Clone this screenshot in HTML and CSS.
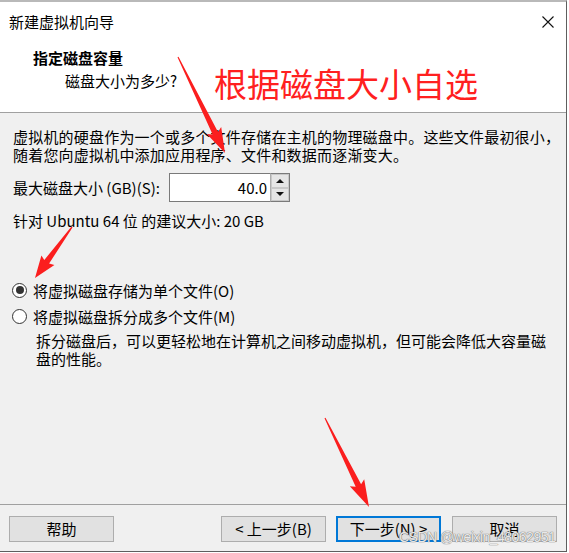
FILE: index.html
```html
<!DOCTYPE html>
<html lang="zh-CN">
<head>
<meta charset="utf-8">
<title>新建虚拟机向导</title>
<link rel="stylesheet" href="styles.css">
</head>
<body>
<div class="window">
  <div class="titlebar">
    <span class="title">新建虚拟机向导</span>
    <svg class="close" width="12" height="12" viewBox="0 0 12 12"><path d="M0.5 0.5 L11.5 11.5 M11.5 0.5 L0.5 11.5" stroke="#111" stroke-width="1.1" fill="none"/></svg>
  </div>
  <div class="header">
    <div class="h-title">指定磁盘容量</div>
    <div class="h-sub">磁盘大小为多少?</div>
  </div>
  <div class="content">
    <p class="intro">虚拟机的硬盘作为一个或多个文件存储在主机的物理磁盘中。这些文件最初很小，<br>随着您向虚拟机中添加应用程序、文件和数据而逐渐变大。</p>
    <div class="size-row">
      <span class="size-label">最大磁盘大小 (GB)(S):</span>
      <div class="spin">
        <div class="spin-input">40.0</div>
        <div class="spin-btns">
          <div class="sb"><span class="tri-up"></span></div>
          <div class="sb"><span class="tri-down"></span></div>
        </div>
      </div>
    </div>
    <p class="rec">针对 Ubuntu 64 位 的建议大小: 20 GB</p>
    <div class="radio-row first"><span class="radio checked"></span>将虚拟磁盘存储为单个文件(O)</div>
    <div class="radio-row"><span class="radio"></span>将虚拟磁盘拆分成多个文件(M)</div>
    <p class="desc">拆分磁盘后，可以更轻松地在计算机之间移动虚拟机，但可能会降低大容量磁<br>盘的性能。</p>
  </div>
  <div class="footer">
    <div class="btn">帮助</div>
    <div class="spacer"></div>
    <div class="btn">&lt; 上一步(B)</div>
    <div class="btn default">下一步(N) &gt;</div>
    <div class="btn last">取消</div>
  </div>
</div>
<div class="annot">根据磁盘大小自选</div>
<svg class="arrows" width="569" height="553" viewBox="0 0 569 553">
  <polygon fill="#fb1e1e" points="177.5,57.3 212.6,134.5 206.8,134.1 225,153 221.2,127.1 218.0,131.9 178.5,56.7"/>
  <polygon fill="#fb1e1e" points="71.5,226.6 44.3,260.0 41.4,255.5 35,278 54.4,264.9 49.1,263.6 72.5,227.4"/>
  <polygon fill="#fb1e1e" points="324.5,418.3 355.7,486.8 349.8,486.3 369,507 364.2,479.3 361.1,484.2 325.5,417.7"/>
</svg>
<div class="watermark">CSDN @weixin_48062951</div>
</body>
</html>
```

FILE: styles.css
```css
html, body {
  margin: 0;
  padding: 0;
  background: #ffffff;
}
body {
  width: 569px;
  height: 553px;
  position: relative;
  overflow: hidden;
  font-family: "Noto Sans CJK SC", "Noto Sans", sans-serif;
  font-size: 15px;
  color: #000;
}
.window {
  width: 567px;
  height: 552px;
  box-sizing: border-box;
  border-top: 2px solid #b9b9b9;
  border-right: 1px solid #5e5e5e;
  border-bottom: 1px solid #5e5e5e;
  display: flex;
  flex-direction: column;
  background: #ffffff;
}
.titlebar {
  height: 40px;
  display: flex;
  align-items: center;
  padding-left: 9px;
  padding-right: 12px;
}
.title {
  flex: 1;
  line-height: 40px;
  font-size: 15px;
}
.close {
  display: block;
}
.header {
  height: 64px;
  border-bottom: 1px solid #a0a0a0;
  padding-top: 6px;
}
.h-title {
  padding-left: 33px;
  line-height: 20px;
  font-weight: bold;
  font-size: 15px;
}
.h-sub {
  padding-left: 65px;
  margin-top: 3px;
  line-height: 20px;
  font-size: 15px;
}
.content {
  flex: 1;
  background: #f0f0f0;
  border-bottom: 1px solid #a0a0a0;
  padding: 15px 0 0 13px;
}
.content p {
  margin: 0;
}
.intro {
  line-height: 18px;
  white-space: nowrap;
  letter-spacing: 0.2px;
}
.size-row {
  margin-top: 9px;
  height: 29px;
  display: flex;
  align-items: center;
}
.size-label {
  width: 156px;
  white-space: nowrap;
}
.spin {
  display: flex;
  height: 29px;
}
.spin-input {
  width: 101px;
  box-sizing: border-box;
  height: 29px;
  border: 1px solid #7a7a7a;
  border-right: none;
  background: #fff;
  text-align: right;
  padding-right: 3px;
  line-height: 27px;
}
.spin-btns {
  width: 20px;
  display: flex;
  flex-direction: column;
  border: 1px solid #7a7a7a;
  border-left: 1px solid #adadad;
  box-sizing: border-box;
  background: #fff;
}
.sb {
  flex: 1;
  background: #e5e5e5;
  border: 1px solid #c8c8c8;
  display: flex;
  align-items: center;
  justify-content: center;
}
.tri-up {
  width: 0;
  height: 0;
  border-left: 4px solid transparent;
  border-right: 4px solid transparent;
  border-bottom: 4px solid #111;
}
.tri-down {
  width: 0;
  height: 0;
  border-left: 4px solid transparent;
  border-right: 4px solid transparent;
  border-top: 4px solid #111;
}
.rec {
  margin-top: 10px !important;
  line-height: 18px;
}
.radio-row {
  height: 20px;
  display: flex;
  align-items: center;
  margin-top: 6px;
  white-space: nowrap;
}
.radio-row.first {
  margin-top: 50px;
}
.radio {
  width: 15px;
  height: 15px;
  box-sizing: border-box;
  border: 1px solid #333;
  border-radius: 50%;
  background: #fff;
  margin-left: -1px;
  margin-right: 6px;
  display: flex;
  align-items: center;
  justify-content: center;
}
.radio.checked::after {
  content: "";
  width: 8px;
  height: 8px;
  border-radius: 50%;
  background: #333;
}
.desc {
  margin-top: 6px !important;
  padding-left: 23px;
  line-height: 18px;
  white-space: nowrap;
}
.footer {
  height: 46px;
  box-sizing: border-box;
  background: #f0f0f0;
  padding: 11px 9px 0 9px;
  display: flex;
  align-items: flex-start;
}
.spacer {
  flex: 1;
}
.btn {
  width: 105px;
  height: 26px;
  box-sizing: border-box;
  background: #e1e1e1;
  border: 1px solid #adadad;
  text-align: center;
  line-height: 24px;
  font-size: 15px;
  margin-right: 10px;
}
.btn.default {
  border: 2px solid #0078d7;
  line-height: 22px;
  margin-right: 11px;
}
.btn.last {
  margin-right: 0;
}
.annot {
  position: absolute;
  left: 214px;
  top: 64px;
  font-size: 33px;
  line-height: 38px;
  color: #ff2020;
  white-space: nowrap;
}
.arrows {
  position: absolute;
  left: 0;
  top: 0;
  pointer-events: none;
}
.watermark {
  position: absolute;
  left: 399px;
  top: 528px;
  font-family: "Liberation Sans", Arial, sans-serif;
  font-size: 14px;
  letter-spacing: -0.5px;
  line-height: 18px;
  color: rgba(250, 250, 250, 0.9);
  text-shadow: 0 0 1px #6a6a6a, 0 0 1px #6a6a6a;
  white-space: nowrap;
}
```
